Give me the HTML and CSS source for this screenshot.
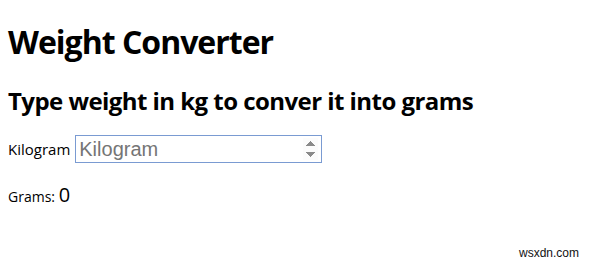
FILE: index.html
```html
<!DOCTYPE html>
<html lang="en">
<head>
    <meta charset="UTF-8">
    <title>Weight Converter</title>
    <link rel="stylesheet" href="styles.css">
</head>
<body>
    <h1>Weight Converter</h1>
    <h2>Type weight in kg to conver it into grams</h2>
    <p class="row">
        <label for="kg" class="kg-label">Kilogram</label>
        <input id="kg" class="kg-input" type="number" placeholder="Kilogram" autofocus>
    </p>
    <p class="result">Grams: <span class="grams" id="grams">0</span></p>
    <div class="mark">wsxdn.com</div>
</body>
</html>
```

FILE: styles.css
```css
body {
    font-family: "Open Sans", sans-serif;
    margin: 0;
    padding: 0 8px;
    color: #000;
    background: #fff;
    position: relative;
    height: 265px;
    box-sizing: border-box;
}

h1 {
    font-size: 32px;
    letter-spacing: -1px;
    margin: 20px 0 21px;
}

h2 {
    font-size: 24px;
    letter-spacing: -0.55px;
    margin: 21px 0 18px;
}

.row {
    display: flex;
    align-items: center;
    gap: 5px;
    margin: 18px 0;
}

.kg-label {
    font-size: 15px;
}

.kg-input {
    width: 247px;
    height: 28px;
    box-sizing: border-box;
    font-family: Arial, "Liberation Sans", sans-serif;
    font-size: 20px;
    border: 1px solid #7a9bd2;
    padding: 1px 3px;
    outline: none;
}

.kg-input::placeholder {
    color: #757575;
}

.result {
    font-size: 14px;
    margin: 18px 0;
}

.grams {
    font-size: 20px;
}

.mark {
    position: absolute;
    right: 21px;
    bottom: 5px;
    font-family: "Liberation Sans", Arial, sans-serif;
    font-size: 12px;
    color: #111;
}
```
